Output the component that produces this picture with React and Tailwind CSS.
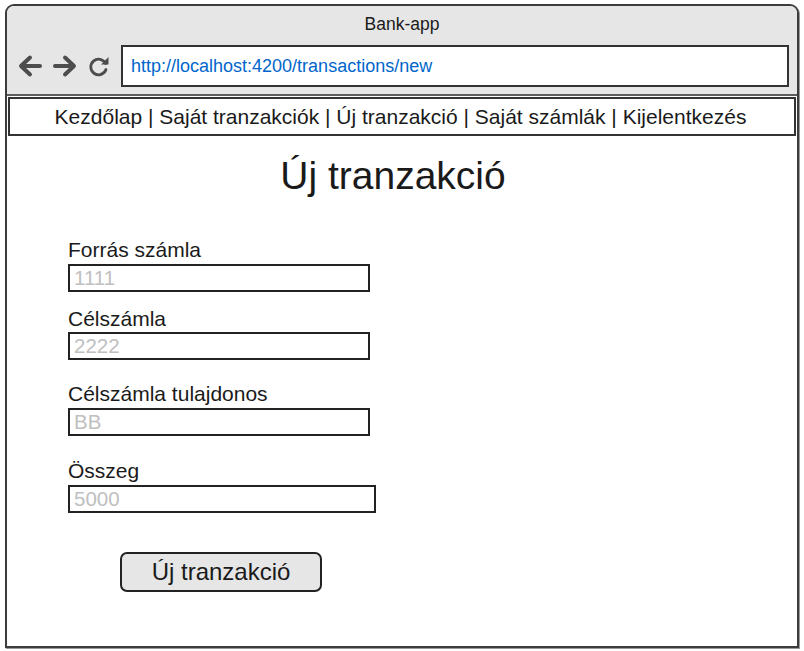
const fields = [
  { label: 'Forrás számla', value: '1111', box: 'mt-[41px]', gap: 'mt-[3px]', w: 'w-[302px]' },
  { label: 'Célszámla', value: '2222', box: 'mt-[16px]', gap: 'mt-[2px]', w: 'w-[302px]' },
  { label: 'Célszámla tulajdonos', value: 'BB', box: 'mt-[23px]', gap: 'mt-[3px]', w: 'w-[302px]' },
  { label: 'Összeg', value: '5000', box: 'mt-[24px]', gap: 'mt-[3px]', w: 'w-[308px]' },
]

function BackIcon() {
  return (
    <svg width="26" height="24" viewBox="0 0 26 24" className="text-[#4d4d4d]">
      <path d="M23 12H5M13 3.5L4 12l9 8.5" fill="none" stroke="currentColor" strokeWidth="4" strokeLinecap="round" strokeLinejoin="round" />
    </svg>
  )
}

function ForwardIcon() {
  return (
    <svg width="26" height="24" viewBox="0 0 26 24" className="text-[#4d4d4d]">
      <path d="M3 12h18M13 3.5L22 12l-9 8.5" fill="none" stroke="currentColor" strokeWidth="4" strokeLinecap="round" strokeLinejoin="round" />
    </svg>
  )
}

function ReloadIcon() {
  return (
    <svg width="24" height="24" viewBox="0 0 24 24" className="text-[#4d4d4d]">
      <path d="M18.6 9.5A7.8 7.8 0 1 0 19 15.5" fill="none" stroke="currentColor" strokeWidth="2.8" strokeLinecap="round" />
      <path d="M14 10.5h7.5V3z" fill="currentColor" />
    </svg>
  )
}

export default function App() {
  return (
    <div className="w-[804px] h-[651px] bg-white pt-[4px] pl-[5px] font-['Liberation_Sans',Arial,sans-serif] text-[#1a1a1a]">
      <div className="w-[794px] h-[644px] border-2 border-[#3c3c3c] rounded-t-[9px] overflow-hidden shadow-[1px_1px_0_#999] flex flex-col">
        {/* browser chrome */}
        <div className="h-[90px] bg-[#e6e6e6] border-b-2 border-[#5c5c5c] flex flex-col">
          <div className="h-[37px] flex items-center justify-center text-[17.5px]">Bank-app</div>
          <div className="flex items-center pl-[10px] pr-[8px] mt-[2px]">
            <BackIcon />
            <div className="ml-[9px]"><ForwardIcon /></div>
            <div className="ml-[9px]"><ReloadIcon /></div>
            <div className="flex-1 ml-[10px] h-[42px] bg-white border-2 border-[#333] flex items-center pl-[8px] text-[18px] text-[#0066cc]">
              http://localhost:4200/transactions/new
            </div>
          </div>
        </div>

        {/* page */}
        <div className="flex-1 flex flex-col">
          <div className="mx-[1px] mt-[1px] h-[39px] border-2 border-[#333] flex items-center justify-center pr-[3px] text-[21px]">
            Kezdőlap | Saját tranzakciók | Új tranzakció | Saját számlák | Kijelentkezés
          </div>
          <h1 className="mt-[18px] pr-[18px] text-center text-[39px] leading-[44px]">Új tranzakció</h1>

          <form className="pl-[61px] flex flex-col items-start">
            {fields.map((f) => (
              <div key={f.label} className={`flex flex-col ${f.box}`}>
                <label className="text-[21px] leading-[22px]">{f.label}</label>
                <div className={`${f.gap} ${f.w} h-[28px] border-2 border-[#222] flex items-center pl-[4px] text-[20.5px] text-[#c0c0c0]`}>
                  {f.value}
                </div>
              </div>
            ))}
            <button
              type="button"
              className="mt-[39px] ml-[52px] w-[202px] h-[40px] rounded-[7px] border-2 border-[#222] bg-[#e6e6e6] text-[24px] leading-[28px] text-[#1a1a1a]"
            >
              Új tranzakció
            </button>
          </form>
        </div>
      </div>
    </div>
  )
}
